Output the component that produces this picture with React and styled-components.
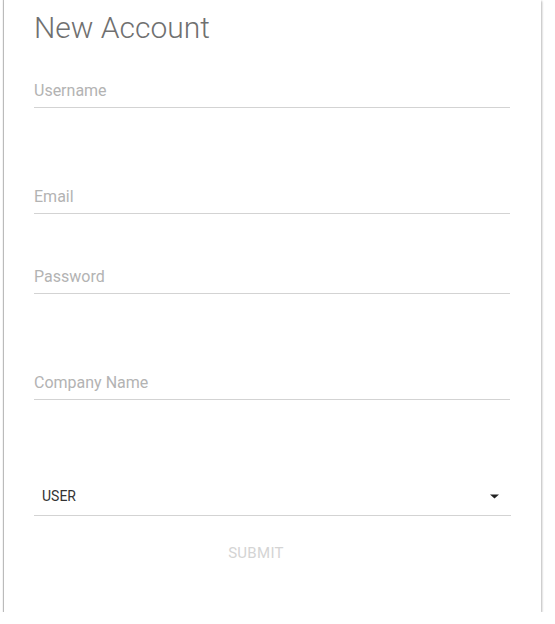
import React from "react";
import styled, { createGlobalStyle } from "styled-components";

const Global = createGlobalStyle`
  body {
    margin: 0;
    background: #fff;
    font-family: Roboto, "Noto Sans", sans-serif;
  }
`;

const Page = styled.div`
  padding-left: 4px;
  width: 537px;
`;

const Card = styled.div`
  background: #fff;
  box-shadow: -1px 0 1px rgba(0, 0, 0, 0.25), 1px 1px 2px rgba(0, 0, 0, 0.28);
  padding: 9px 31px 41px 30px;
`;

const Title = styled.h1`
  margin: 0;
  font-size: 30px;
  font-weight: 300;
  line-height: 37px;
  color: #707070;
`;

const Field = styled.input`
  display: block;
  width: 100%;
  box-sizing: border-box;
  margin: ${(p) => p.$top}px 0 0;
  padding: 1px 0 6px;
  border: none;
  border-bottom: 1px solid #d3d3d3;
  outline: none;
  font-family: Roboto, "Noto Sans", sans-serif;
  font-size: 16px;
  line-height: 20px;
  color: #333;
  background: transparent;

  &::placeholder {
    color: #b3b3b3;
  }
`;

const Select = styled.div`
  display: flex;
  align-items: center;
  justify-content: space-between;
  width: 477px;
  box-sizing: border-box;
  margin-top: 87px;
  padding: 0 12px 10px 8px;
  border-bottom: 1px solid #d3d3d3;
  font-size: 14px;
  line-height: 18px;
  color: #333;
`;

const ButtonRow = styled.div`
  display: flex;
  justify-content: center;
  padding-right: 32px;
  margin-top: 19px;
`;

const Submit = styled.button`
  border: none;
  background: transparent;
  font-family: Roboto, "Noto Sans", sans-serif;
  font-size: 15px;
  letter-spacing: 0.3px;
  height: 36px;
  padding: 0 8px;
  color: #d4d4d4;
`;

const Arrow = () => (
  <svg width="9" height="5" viewBox="0 0 9 5">
    <path d="M0 0.5 L9 0.5 L4.5 4.5 Z" fill="#222" />
  </svg>
);

const App = () => {
  return (
    <Page>
      <Global />
      <Card>
        <Title>New Account</Title>
        <Field $top={34} placeholder="Username" />
        <Field $top={78} placeholder="Email" />
        <Field $top={52} placeholder="Password" type="password" />
        <Field $top={78} placeholder="Company Name" />
        <Select>
          <span>USER</span>
          <Arrow />
        </Select>
        <ButtonRow>
          <Submit disabled>SUBMIT</Submit>
        </ButtonRow>
      </Card>
    </Page>
  );
};

export default App;
